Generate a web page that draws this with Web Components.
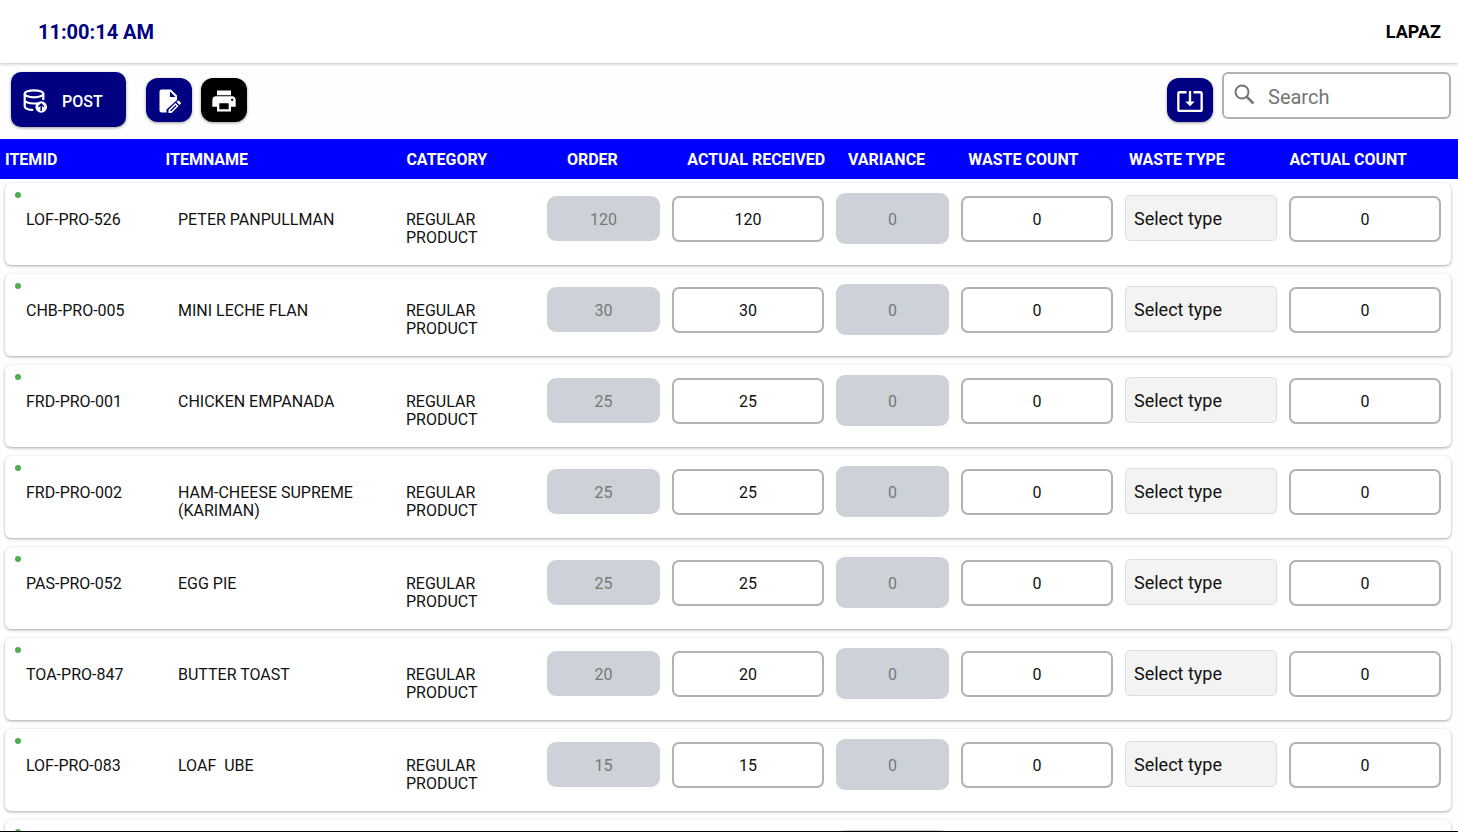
<!DOCTYPE html>
<html lang="en">
<head>
<meta charset="utf-8">
<meta name="viewport" content="width=device-width, initial-scale=1">
<title>Received items</title>
<style>
  body { margin: 0; background: #fefefe; font-family: Roboto, "Liberation Sans", sans-serif; font-size: 16px; color: #111; }
</style>
</head>
<body>
<stock-app>
  <top-bar slot="top" time="11:00:14 AM" branch="LAPAZ"></top-bar>
  <tool-bar slot="tools"></tool-bar>
  <stock-table></stock-table>
</stock-app>

<script>
const define = (name, html, setup) => {
  const template = document.createElement('template');
  template.innerHTML = html;
  customElements.define(name, class extends HTMLElement {
    connectedCallback() {
      if (this.shadowRoot) return;
      const root = this.attachShadow({ mode: 'open' });
      root.append(template.content.cloneNode(true));
      if (setup) setup(this, root);
    }
  });
};

define('stock-app', `
  <style>
    :host { display: flex; flex-direction: column; height: 100vh; box-sizing: border-box; border-bottom: 1px solid #000; overflow: hidden; }
    main { flex: 1; min-height: 0; overflow: hidden; }
  </style>
  <slot name="top"></slot>
  <slot name="tools"></slot>
  <main><slot></slot></main>
`);

define('top-bar', `
  <style>
    :host { display: block; flex: none; background: #fff; box-shadow: 0 1px 3px rgba(0,0,0,.25); }
    header { display: flex; align-items: center; justify-content: space-between; height: 63px; padding: 0 17px 0 38px; }
    time { font-size: 20px; line-height: 24px; font-weight: 700; color: #000080; }
    span { font-size: 18px; line-height: 22px; font-weight: 700; color: #000; }
  </style>
  <header><time></time><span></span></header>
`, (el, root) => {
  root.querySelector('time').textContent = el.getAttribute('time');
  root.querySelector('span').textContent = el.getAttribute('branch');
});

define('icon-button', `
  <style>
    :host { display: block; }
    button { display: flex; align-items: center; justify-content: center; width: 46px; height: 44px; padding: 2px 0 0; border: 0; box-sizing: border-box;
      border-radius: 12px; background: #000080; color: #fff; font: 500 16px/20px Roboto, sans-serif; box-shadow: 0 1px 3px rgba(0,0,0,.4); }
    :host([tone="black"]) button { background: #000; }
    :host([wide]) button { width: 115px; height: 55px; gap: 14px; padding: 4px 22px 0 12px; justify-content: flex-start; border-radius: 10px; }
  </style>
  <button type="button"><slot></slot></button>
`, (el, root) => {
  if (el.hasAttribute('label')) root.querySelector('button').setAttribute('aria-label', el.getAttribute('label'));
});

define('search-box', `
  <style>
    :host { display: block; }
    label { display: flex; align-items: center; gap: 12px; width: 229px; height: 47px; box-sizing: border-box; padding: 2px 10px 0;
      border: 2px solid #b2b2b2; border-radius: 6px; background: #fff; }
    svg { flex: none; }
    input { flex: 1; min-width: 0; padding: 0; border: 0; outline: 0; background: none; font: 400 20px/24px Roboto, sans-serif; color: #111; }
    input::placeholder { color: #757575; opacity: 1; }
  </style>
  <label>
    <svg width="22" height="26" viewBox="1 2 22 26" fill="none" stroke="#757575" stroke-width="2" aria-hidden="true"><circle cx="9" cy="10" r="6.500"/><path d="M13.500 14.500 20.500 21.500" stroke-width="2.500"/></svg>
    <input type="search" placeholder="Search" aria-label="Search">
  </label>
`);

define('tool-bar', `
  <style>
    :host { display: flex; flex: none; justify-content: space-between; align-items: flex-start; padding: 9px 7px 12px 11px; }
    .group { display: flex; align-items: center; gap: 9px; }
    .first { margin-right: 11px; }
    .import { margin-top: 6px; }
    .right { align-items: flex-start; }
  </style>
  <div class="group">
    <icon-button wide class="first">
      <svg width="25" height="25" viewBox="0 0 25 25" fill="none" stroke="#fff" stroke-width="2.200" aria-hidden="true">
        <ellipse cx="11" cy="4.800" rx="9.300" ry="3.500"/><path d="M1.700 5v12.500c0 2 4 3.500 8.500 3.500M20.300 5v6M1.700 11c0 2 4 3.500 9 3.500 1.500 0 3-.2 4-.6"/>
        <circle cx="18.200" cy="18" r="5.800" fill="#fff" stroke="none"/><path d="M18.200 22v-6.500M15.500 17.800l2.700-2.700 2.700 2.700" stroke="#000080" stroke-width="1.500"/>
      </svg>POST</icon-button>
    <icon-button label="Edit">
      <svg width="24" height="24" viewBox="0 0 24 24" fill="#fff" aria-hidden="true"><path d="M4.500.5H14L20 6.500V11L9.500 20.500V23.500H4.500a2 2 0 0 1-2-2V2.500a2 2 0 0 1 2-2zM13 2.500V8h5.500z" fill-rule="evenodd"/><path d="M11.500 24v-3.200l7-6.800 3 3-7 7zM19.500 13l1.200-1.200q.6-.5 1.200 0l1.800 1.800q.5.600 0 1.200L22.500 16z"/><path d="M13.500 22 19 16.500" stroke="#000080" stroke-width="1.200"/></svg>
    </icon-button>
    <icon-button label="Print" tone="black">
      <svg width="28" height="28" viewBox="0 0 24 24" fill="#fff" aria-hidden="true"><path d="M19 8H5c-1.660 0-3 1.340-3 3v6h4v4h12v-4h4v-6c0-1.660-1.340-3-3-3zm-3 11H8v-5h8v5zm3-7c-.55 0-1-.45-1-1s.45-1 1-1 1 .45 1 1-.45 1-1 1zm-1-9H6v4h12V3z"/></svg>
    </icon-button>
  </div>
  <div class="group right">
    <icon-button label="Import" class="import">
      <svg width="28" height="28" viewBox="0 0 24 24" fill="#fff" aria-hidden="true"><path d="M12 16.500l4-4h-3v-9h-2v9H8l4 4zm9-13h-6v1.990h6v14.030H3V5.490h6V3.500H3c-1.100 0-2 .9-2 2v14c0 1.100.9 2 2 2h18c1.100 0 2-.9 2-2v-14c0-1.100-.9-2-2-2z"/></svg>
    </icon-button>
    <search-box></search-box>
  </div>
`);

define('qty-field', `
  <style>
    :host { display: block; padding-top: 3px; }
    input { display: block; width: 100%; height: 46px; box-sizing: border-box; margin: 0; padding: 0; border: 2px solid #b2b2b2; border-radius: 7px;
      background: #fff; color: #111; text-align: center; font: 400 16px/20px Roboto, sans-serif; }
    input:disabled { height: 45px; padding-top: 2px; border-color: #cdd2d9; border-radius: 9px; background: #cdd2d9; color: #777; }
    :host([tall]) { padding-top: 0; }
    :host([tall]) input { height: 51px; }
  </style>
  <input type="text" inputmode="numeric">
`, (el, root) => {
  const input = root.querySelector('input');
  input.value = el.getAttribute('value');
  input.disabled = el.hasAttribute('locked');
  input.setAttribute('aria-label', el.getAttribute('label'));
});

define('waste-select', `
  <style>
    :host { display: block; padding-top: 2px; }
    select { appearance: none; display: block; width: 100%; height: 46px; box-sizing: border-box; margin: 0; padding: 2px 8px 0; border: 1px solid #ddd;
      border-radius: 5px; background: #f3f3f3; color: #111; font: 400 18px/22px Roboto, sans-serif; }
  </style>
  <select aria-label="Waste type"><option>Select type</option></select>
`);

define('stock-table', `
  <style>
    :host { display: block; }
    table, thead, tbody { display: block; }
    tr { display: grid; }
    th, td { padding: 0; min-width: 0; text-align: left; }
    thead tr { grid-template-columns: 4fr 6fr 4fr 3fr 4fr 3fr 4fr 4fr 4fr;
      align-items: center; height: 40px; padding: 2px 8px 0 5px; box-sizing: border-box; background: #00f; color: #fff; }
    th { font-size: 16px; line-height: 20px; font-weight: 700; white-space: nowrap; }
    tbody { padding: 4px 7px 0 5px; }
    tbody tr { position: relative; grid-template-columns: 140fr 216fr 129fr 113fr 152fr 113fr 152fr 152fr 152fr; column-gap: 12px; align-items: start;
      min-height: 82px; box-sizing: border-box; margin-bottom: 9px; padding: 10px 10px 10px 21px; border-radius: 6px; background: #fff;
      box-shadow: 0 1px 3px rgba(0,0,0,.35); }
    tbody tr::before { content: ""; position: absolute; left: 10px; top: 9px; width: 6px; height: 6px; border-radius: 50%; background: #4caf50; }
    .text { padding-top: 18px; font-size: 16px; line-height: 18px; white-space: pre-wrap; }
  </style>
  <table>
    <thead><tr><th>ITEMID</th><th>ITEMNAME</th><th>CATEGORY</th><th>ORDER</th><th>ACTUAL RECEIVED</th><th>VARIANCE</th><th>WASTE COUNT</th><th>WASTE TYPE</th><th>ACTUAL COUNT</th></tr></thead>
    <tbody></tbody>
  </table>
`, (el, root) => {
  const items = [
    ['LOF-PRO-526', 'PETER PANPULLMAN', 120],
    ['CHB-PRO-005', 'MINI LECHE FLAN', 30],
    ['FRD-PRO-001', 'CHICKEN EMPANADA', 25],
    ['FRD-PRO-002', 'HAM-CHEESE SUPREME (KARIMAN)', 25],
    ['PAS-PRO-052', 'EGG PIE', 25],
    ['TOA-PRO-847', 'BUTTER TOAST', 20],
    ['LOF-PRO-083', 'LOAF  UBE', 15],
    ['', '', '']
  ];
  root.querySelector('tbody').innerHTML = items.map(([id, name, qty]) => `<tr>
    <td class="text">${id}</td><td class="text">${name}</td><td class="text">${id && 'REGULAR PRODUCT'}</td>
    <td><qty-field locked label="Order" value="${qty}"></qty-field></td>
    <td><qty-field label="Actual received" value="${qty}"></qty-field></td>
    <td><qty-field locked tall label="Variance" value="${id && 0}"></qty-field></td>
    <td><qty-field label="Waste count" value="${id && 0}"></qty-field></td>
    <td><waste-select></waste-select></td>
    <td><qty-field label="Actual count" value="${id && 0}"></qty-field></td></tr>`).join('');
});
</script>
</body>
</html>
